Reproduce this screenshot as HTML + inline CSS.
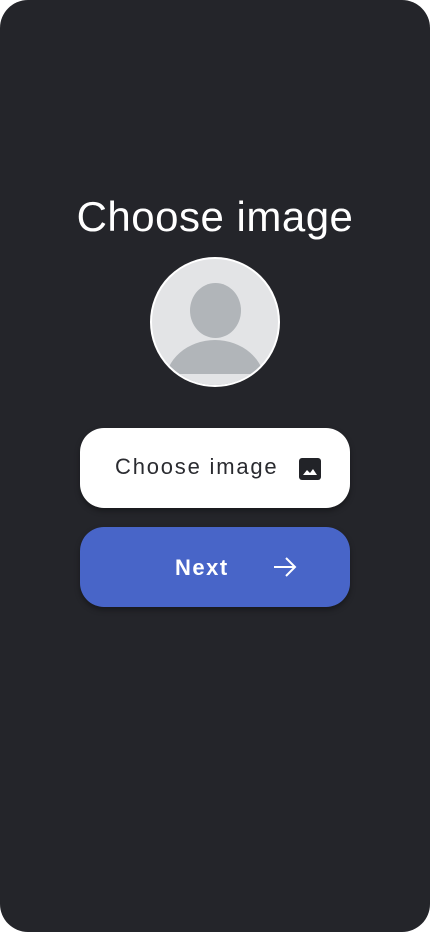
<!DOCTYPE html>
<html><head><meta charset="utf-8"><style>
html,body{margin:0;padding:0;background:#fff;width:430px;height:932px;overflow:hidden;font-family:"Liberation Sans",sans-serif}
.p{position:absolute;left:0;top:0;width:430px;height:932px;background:#24252a;border-radius:28px}
h1{position:absolute;top:193px;left:0;width:430px;margin:0;text-align:center;color:#fff;font-weight:400;font-size:42px;letter-spacing:0.5px}
.av{position:absolute;left:150px;top:257px;width:126px;height:126px;border:2px solid #fff;border-radius:50%;background:#e3e4e6;overflow:hidden}
.b{position:absolute;left:80px;width:270px;height:80px;border-radius:24px;box-shadow:0 3px 6px rgba(0,0,0,.35)}
.w{top:428px;background:#fff;color:#2a2b30}
.n{top:527px;background:#4865c8;color:#fff}
.t{position:absolute;font-size:22px;top:26px}
</style></head><body><div class="p">
<h1>Choose image</h1>
<div class="av"><svg width="126" height="126" viewBox="0 0 126 126"><ellipse cx="63.5" cy="51.5" rx="25.5" ry="27.5" fill="#b1b5b9"/><ellipse cx="63" cy="125" rx="50" ry="44" fill="#b1b5b9"/><rect x="0" y="115" width="126" height="12" fill="#e3e4e6"/></svg></div>
<div class="b w"><span class="t" style="left:35px;letter-spacing:1.8px">Choose image</span>
<svg style="position:absolute;left:218px;top:29px" width="24" height="24" viewBox="0 0 24 24"><rect x="1" y="1" width="22" height="22" rx="3" fill="#222328"/><path d="M5 18 L9 13 L12 16 L15 12 L19 18 Z" fill="#fff"/></svg></div>
<div class="b n"><span class="t" style="left:95px;top:28px;font-weight:700;letter-spacing:1.5px">Next</span>
<svg style="position:absolute;left:192px;top:28px" width="26" height="24" viewBox="0 0 26 24"><path d="M2 12 H23 M14 3 L23 12 L14 21" stroke="#fff" stroke-width="2" fill="none"/></svg></div>
</div></body></html>
